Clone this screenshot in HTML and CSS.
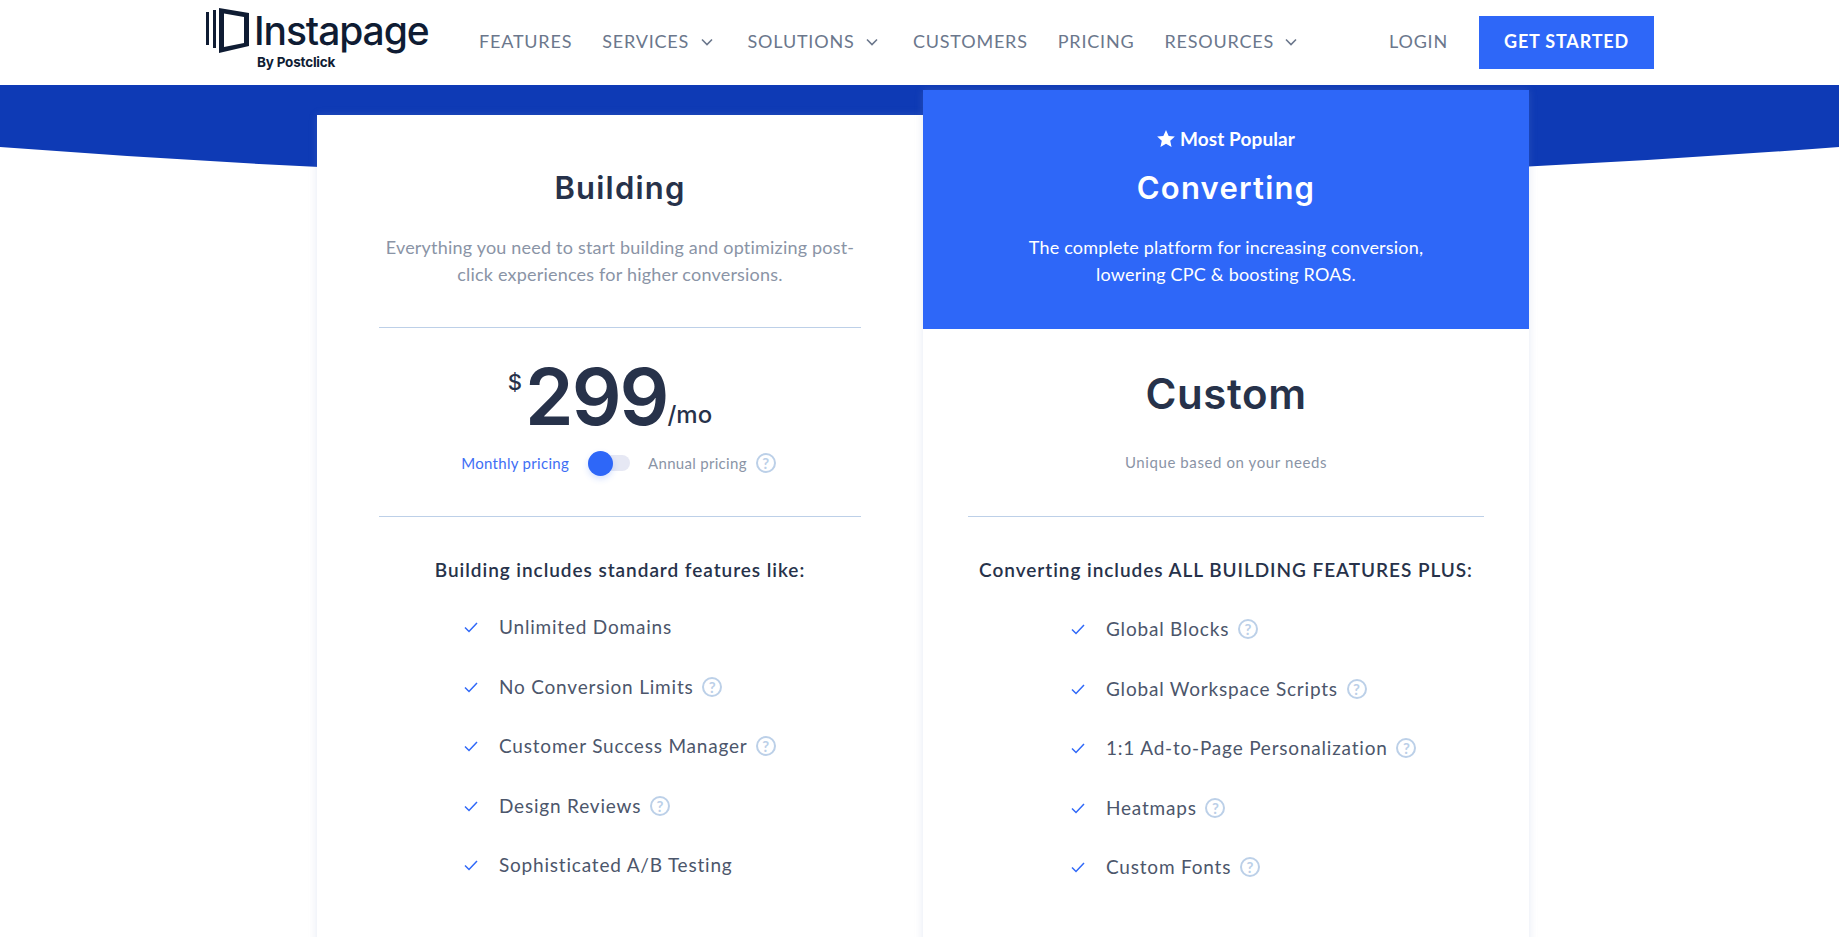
FILE: index.html
```html
<!DOCTYPE html>
<html lang="en">
<head>
    <meta charset="UTF-8">
    <title>Instapage Pricing</title>
    <link rel="stylesheet" href="styles.css">
</head>
<body>
<div class="page">
    <header class="site-header">
        <a class="logo" href="#">
            <svg class="logo-mark" width="46" height="48" viewBox="0 0 46 48">
                <path d="M2.500 5v33M9.500 3v38" fill="none" stroke="#0f1c33" stroke-width="3"/>
                <path d="M14 1L44 6V39L14 46ZM19 6.500V40L39 36V10Z" fill="#0f1c33" fill-rule="evenodd"/>
            </svg>
            <span class="logo-text">
                <span class="logo-name">Instapage</span>
                <span class="logo-by">By Postclick</span>
            </span>
        </a>
        <nav class="main-nav">
            <a href="#">FEATURES</a>
            <a href="#">SERVICES <svg class="chevron" width="12" height="8" viewBox="0 0 12 8"><path d="M1 1.500l5 5 5-5" fill="none" stroke="#6b778c" stroke-width="1.600"/></svg></a>
            <a href="#">SOLUTIONS <svg class="chevron" width="12" height="8" viewBox="0 0 12 8"><path d="M1 1.500l5 5 5-5" fill="none" stroke="#6b778c" stroke-width="1.600"/></svg></a>
            <a href="#">CUSTOMERS</a>
            <a href="#">PRICING</a>
            <a href="#">RESOURCES <svg class="chevron" width="12" height="8" viewBox="0 0 12 8"><path d="M1 1.500l5 5 5-5" fill="none" stroke="#6b778c" stroke-width="1.600"/></svg></a>
        </nav>
        <a class="login" href="#">LOGIN</a>
        <a class="get-started" href="#">GET STARTED</a>
    </header>

    <main class="pricing">
        <svg class="band" viewBox="0 0 1839 140" preserveAspectRatio="none">
            <path d="M0 0H1839V62Q919.500 132 0 62Z" fill="#0e3ab5"/>
        </svg>

        <div class="plans">
            <section class="plan plan-building">
                <div class="plan-head">
                    <h2 class="plan-title">Building</h2>
                    <p class="plan-desc">Everything you need to start building and optimizing post-click experiences for higher conversions.</p>
                </div>
                <div class="price-box">
                    <div class="price"><span class="currency">$</span><span class="amount">299</span><span class="per">/mo</span></div>
                    <div class="billing">
                        <span class="billing-on">Monthly pricing</span>
                        <span class="switch"><span class="knob"></span></span>
                        <span class="billing-off">Annual pricing</span>
                        <span class="help">?</span>
                    </div>
                </div>
                <div class="features">
                    <h3 class="features-title">Building includes standard features like:</h3>
                    <ul class="feature-list">
                        <li><svg class="check" width="14" height="11" viewBox="0 0 14 11"><path d="M1 5.500l4 4 8-8.500" fill="none" stroke="#2f68f8" stroke-width="1.500"/></svg>Unlimited Domains</li>
                        <li><svg class="check" width="14" height="11" viewBox="0 0 14 11"><path d="M1 5.500l4 4 8-8.500" fill="none" stroke="#2f68f8" stroke-width="1.500"/></svg>No Conversion Limits <span class="help">?</span></li>
                        <li><svg class="check" width="14" height="11" viewBox="0 0 14 11"><path d="M1 5.500l4 4 8-8.500" fill="none" stroke="#2f68f8" stroke-width="1.500"/></svg>Customer Success Manager <span class="help">?</span></li>
                        <li><svg class="check" width="14" height="11" viewBox="0 0 14 11"><path d="M1 5.500l4 4 8-8.500" fill="none" stroke="#2f68f8" stroke-width="1.500"/></svg>Design Reviews <span class="help">?</span></li>
                        <li><svg class="check" width="14" height="11" viewBox="0 0 14 11"><path d="M1 5.500l4 4 8-8.500" fill="none" stroke="#2f68f8" stroke-width="1.500"/></svg>Sophisticated A/B Testing</li>
                    </ul>
                </div>
            </section>

            <section class="plan plan-converting">
                <div class="plan-banner">
                    <div class="popular"><svg width="18" height="17" viewBox="0 0 24 23"><path d="M12 0l3.600 8 8.400.800-6.300 5.700 1.800 8.500L12 18.600 4.500 23l1.800-8.500L0 8.800 8.400 8z" fill="#fff"/></svg>Most Popular</div>
                    <h2 class="plan-title">Converting</h2>
                    <p class="plan-desc">The complete platform for increasing conversion, lowering CPC &amp; boosting ROAS.</p>
                </div>
                <div class="custom-box">
                    <div class="custom-name">Custom</div>
                    <div class="custom-note">Unique based on your needs</div>
                </div>
                <div class="features">
                    <h3 class="features-title">Converting includes ALL BUILDING FEATURES PLUS:</h3>
                    <ul class="feature-list">
                        <li><svg class="check" width="14" height="11" viewBox="0 0 14 11"><path d="M1 5.500l4 4 8-8.500" fill="none" stroke="#2f68f8" stroke-width="1.500"/></svg>Global Blocks <span class="help">?</span></li>
                        <li><svg class="check" width="14" height="11" viewBox="0 0 14 11"><path d="M1 5.500l4 4 8-8.500" fill="none" stroke="#2f68f8" stroke-width="1.500"/></svg>Global Workspace Scripts <span class="help">?</span></li>
                        <li><svg class="check" width="14" height="11" viewBox="0 0 14 11"><path d="M1 5.500l4 4 8-8.500" fill="none" stroke="#2f68f8" stroke-width="1.500"/></svg>1:1 Ad-to-Page Personalization <span class="help">?</span></li>
                        <li><svg class="check" width="14" height="11" viewBox="0 0 14 11"><path d="M1 5.500l4 4 8-8.500" fill="none" stroke="#2f68f8" stroke-width="1.500"/></svg>Heatmaps <span class="help">?</span></li>
                        <li><svg class="check" width="14" height="11" viewBox="0 0 14 11"><path d="M1 5.500l4 4 8-8.500" fill="none" stroke="#2f68f8" stroke-width="1.500"/></svg>Custom Fonts <span class="help">?</span></li>
                    </ul>
                </div>
            </section>
        </div>
    </main>
</div>
</body>
</html>
```

FILE: styles.css
```css
* {
    box-sizing: border-box;
}

body {
    margin: 0;
    font-family: "Lato", "Open Sans", sans-serif;
    color: #27324a;
    background-color: white;
}

a {
    text-decoration: none;
}

.page {
    height: 100vh;
    overflow: hidden;
}

.site-header {
    display: flex;
    align-items: center;
    height: 85px;
    padding: 0 185px 0 205px;
    background-color: white;
}

.logo {
    display: flex;
    width: 274px;
    height: 85px;
    padding-top: 7px;
    color: #0f1c33;
}

.logo-mark {
    flex: none;
    margin-right: 3px;
}

.logo-text {
    display: flex;
    flex-direction: column;
    padding-top: 3px;
}

.logo-name {
    font-family: "Inter", sans-serif;
    font-size: 39px;
    font-weight: 500;
    line-height: 42px;
    letter-spacing: -1.100px;
}

.logo-by {
    margin-top: 2px;
    padding-left: 3px;
    font-family: "Inter", sans-serif;
    font-size: 13.500px;
    font-weight: 700;
    line-height: 16px;
    letter-spacing: -0.2px;
}

.main-nav {
    display: flex;
    gap: 30px;
    margin-top: -4px;
}

.main-nav a,
.login {
    font-size: 18px;
    letter-spacing: 0.8px;
    color: #6b778c;
}

.login {
    margin: -4px 31px 0 auto;
}

.chevron {
    margin: 0 5px 0 6px;
    vertical-align: 2px;
}

.get-started {
    display: flex;
    align-items: center;
    justify-content: center;
    width: 175px;
    height: 53px;
    padding-bottom: 3px;
    font-size: 18px;
    font-weight: 700;
    letter-spacing: 0.8px;
    color: white;
    background-color: #2e67f8;
}

.pricing {
    position: relative;
}

.band {
    position: absolute;
    top: 0;
    left: 0;
    width: 100%;
    height: 140px;
}

.plans {
    position: relative;
    display: grid;
    grid-template-columns: 606px 606px;
    justify-content: center;
    align-items: start;
    padding-left: 7px;
}

.plan {
    height: 900px;
    background-color: white;
    box-shadow: 0 0 8px rgba(130, 155, 200, 0.22);
    text-align: center;
}

.plan-building {
    margin-top: 30px;
    padding: 0 62px;
}

.plan-converting {
    margin-top: 5px;
}

.plan-head {
    height: 213px;
    padding-top: 53px;
    border-bottom: 1px solid #bdd0e8;
}

.plan-title {
    margin: 0;
    font-family: "Inter", sans-serif;
    font-size: 31px;
    font-weight: 600;
    line-height: 40px;
    letter-spacing: 1.200px;
}

.plan-desc {
    margin: 26px 0 0;
    font-size: 18px;
    line-height: 27px;
    letter-spacing: 0.2px;
    color: #8a94a6;
}

.plan-banner {
    height: 239px;
    padding: 33px 90px 0;
    color: white;
    background-color: #2e67f8;
}

.plan-banner .plan-desc {
    color: white;
}

.popular {
    display: flex;
    align-items: center;
    justify-content: center;
    gap: 5px;
    height: 30px;
    margin-bottom: 15px;
    font-size: 19px;
    font-weight: 700;
    letter-spacing: 0.1px;
}

.price-box {
    height: 189px;
    padding-top: 15px;
    border-bottom: 1px solid #bdd0e8;
}

.price {
    display: flex;
    justify-content: center;
    align-items: flex-end;
    height: 108px;
    padding-right: 20px;
}

.currency {
    align-self: flex-start;
    margin-top: 26px;
    margin-right: 3px;
    font-family: "Inter", sans-serif;
    font-size: 22px;
    font-weight: 500;
}

.amount {
    font-family: "Inter", sans-serif;
    font-size: 78px;
    font-weight: 600;
    line-height: 108px;
    letter-spacing: -2px;
}

.per {
    margin-bottom: 22px;
    font-family: "Inter", sans-serif;
    font-size: 24px;
    font-weight: 500;
}

.billing {
    display: flex;
    align-items: center;
    justify-content: center;
    margin-top: 2px;
    padding-right: 3px;
    font-size: 15px;
    letter-spacing: 0.3px;
}

.billing-on {
    color: #3e6ef5;
}

.billing-off {
    color: #8a94a6;
}

.switch {
    position: relative;
    width: 42px;
    height: 16px;
    margin: 0 18px 0 19px;
    border-radius: 8px;
    background-color: #e6e8f4;
}

.knob {
    position: absolute;
    top: -4px;
    left: 0;
    width: 25px;
    height: 25px;
    border-radius: 50%;
    background-color: #2e67f8;
    box-shadow: 0 3px 6px rgba(46, 103, 248, 0.2);
}

.help {
    display: inline-flex;
    align-items: center;
    justify-content: center;
    width: 20px;
    height: 20px;
    margin-left: 3px;
    border: 2px solid #bcd0e8;
    border-radius: 50%;
    font-size: 15px;
    font-weight: 700;
    letter-spacing: 0;
    color: #bcd0e8;
    vertical-align: 1px;
}

.billing .help {
    margin-left: 9px;
}

.custom-box {
    height: 188px;
    margin: 0 45px;
    border-bottom: 1px solid #bdd0e8;
}

.custom-name {
    padding-top: 38px;
    font-family: "Inter", sans-serif;
    font-size: 42px;
    font-weight: 600;
    line-height: 54px;
    letter-spacing: 0.6px;
}

.custom-note {
    margin-top: 32px;
    font-size: 15px;
    letter-spacing: 0.6px;
    color: #8a94a6;
}

.features-title {
    margin: 40px 0 0;
    font-size: 19px;
    font-weight: 600;
    line-height: 26px;
    letter-spacing: 0.95px;
}

.feature-list {
    margin: 31px 0 0 85px;
    padding: 0;
    list-style: none;
    text-align: left;
}

.plan-converting .feature-list {
    margin: 33px 0 0 148px;
}

.feature-list li {
    height: 59.600px;
    font-size: 19px;
    line-height: 26px;
    letter-spacing: 0.8px;
    color: #4c566b;
}

.check {
    margin-right: 21px;
    vertical-align: 1px;
}
```
